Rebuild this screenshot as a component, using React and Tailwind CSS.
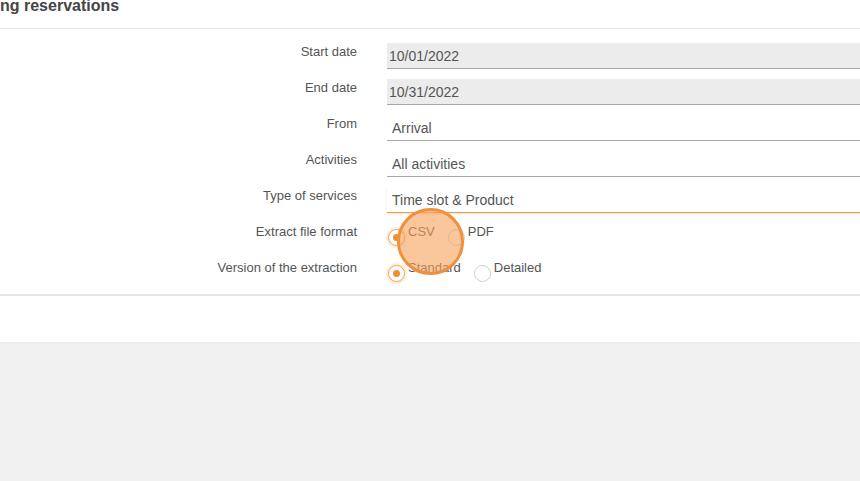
import React from 'react';

const font = { fontFamily: '"Liberation Sans", Arial, sans-serif' };

function TextRow({ label, value, disabled, focused }) {
  return (
    <div className="flex h-[26px] items-start">
      <div className="w-[357px] shrink-0 pt-[1px] text-right text-[13px] leading-4 text-[#555]">{label}</div>
      <div
        className={
          'ml-[30px] flex h-[26px] flex-1 items-center border-b pt-[1px] text-[14px] text-[#555] ' +
          (disabled ? 'bg-[#ececec] border-[#a8a8a8] pl-[2px]' : 'pl-[5px]') +
          (focused ? ' border-[#e8a04a] shadow-[0_1px_2px_rgba(240,170,80,0.35)]' : '') +
          (!disabled && !focused ? ' border-[#a8a8a8]' : '')
        }
      >
        {value}
      </div>
    </div>
  );
}

function Radio({ checked, label, gap }) {
  return (
    <div className={'flex items-start ' + gap}>
      <span
        className={
          'mt-[5px] flex h-[17px] w-[17px] items-center justify-center rounded-full border ' +
          (checked ? 'border-[#f0a050] shadow-[0_0_0_2px_rgba(245,180,110,0.25)]' : 'border-[#d0d0d0]')
        }
      >
        {checked && <span className="h-[7px] w-[7px] rounded-full bg-[#f0902c]" />}
      </span>
      <span className="ml-[3px] text-[13px] leading-4 text-[#555]">{label}</span>
    </div>
  );
}

function RadioRow({ label, options }) {
  return (
    <div className="flex h-[26px] items-start">
      <div className="w-[357px] shrink-0 pt-[1px] text-right text-[13px] leading-4 text-[#555]">{label}</div>
      <div className="ml-[31px] flex items-start pt-[1px]">
        {options.map((o, i) => (
          <Radio key={o.label} checked={o.checked} label={o.label} gap={i > 0 ? o.gap : ''} />
        ))}
      </div>
    </div>
  );
}

export default function App() {
  return (
    <div className="relative min-h-[481px] w-[860px] overflow-hidden bg-[#f1f1f1]" style={font}>
      <div className="bg-white shadow-[0_1px_2px_rgba(0,0,0,0.04)]">
        <div className="flex h-[29px] items-start border-b border-[#e6e6e6]">
          <h1 className="-mt-[4px] text-[16px] font-bold leading-[19px] text-[#444]">ng reservations</h1>
        </div>
        <div className="flex flex-col gap-[10px] border-b-2 border-[#e6e6e6] pb-[9px] pt-[14px]">
          <TextRow label="Start date" value="10/01/2022" disabled />
          <TextRow label="End date" value="10/31/2022" disabled />
          <TextRow label="From" value="Arrival" />
          <TextRow label="Activities" value="All activities" />
          <TextRow label="Type of services" value="Time slot & Product" focused />
          <RadioRow
            label="Extract file format"
            options={[
              { label: 'CSV', checked: true },
              { label: 'PDF', gap: 'ml-[13px]' },
            ]}
          />
          <RadioRow
            label="Version of the extraction"
            options={[
              { label: 'Standard', checked: true },
              { label: 'Detailed', gap: 'ml-[13px]' },
            ]}
          />
        </div>
        <div className="h-[46px]" />
      </div>

      {/* click highlight */}
      <div className="pointer-events-none absolute left-[397px] top-[208px] h-[67px] w-[67px] rounded-full border-[3px] border-[#f0903c] bg-[#f7a05a]/60" />
    </div>
  );
}
